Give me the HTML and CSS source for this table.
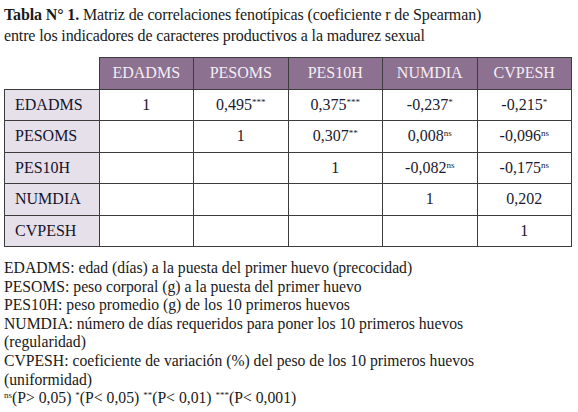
FILE: index.html
```html
<!DOCTYPE html>
<html lang="es">
<head>
<meta charset="utf-8">
<link rel="stylesheet" href="styles.css">
</head>
<body>
<div class="page">
  <p class="title"><b>Tabla N° 1.</b> Matriz de correlaciones fenotípicas (coeficiente r de Spearman)<br>entre los indicadores de caracteres productivos a la madurez sexual</p>
  <table class="matrix">
    <thead>
      <tr>
        <th class="corner"></th>
        <th>EDADMS</th>
        <th>PESOMS</th>
        <th>PES10H</th>
        <th>NUMDIA</th>
        <th>CVPESH</th>
      </tr>
    </thead>
    <tbody>
      <tr>
        <td class="stub">EDADMS</td>
        <td>1</td>
        <td>0,495<sup>***</sup></td>
        <td>0,375<sup>***</sup></td>
        <td>-0,237<sup>*</sup></td>
        <td>-0,215<sup>*</sup></td>
      </tr>
      <tr>
        <td class="stub">PESOMS</td>
        <td></td>
        <td>1</td>
        <td>0,307<sup>**</sup></td>
        <td>0,008<sup>ns</sup></td>
        <td>-0,096<sup>ns</sup></td>
      </tr>
      <tr>
        <td class="stub">PES10H</td>
        <td></td>
        <td></td>
        <td>1</td>
        <td>-0,082<sup>ns</sup></td>
        <td>-0,175<sup>ns</sup></td>
      </tr>
      <tr>
        <td class="stub">NUMDIA</td>
        <td></td>
        <td></td>
        <td></td>
        <td>1</td>
        <td>0,202</td>
      </tr>
      <tr>
        <td class="stub">CVPESH</td>
        <td></td>
        <td></td>
        <td></td>
        <td></td>
        <td>1</td>
      </tr>
    </tbody>
  </table>
  <div class="notes">
    <p>EDADMS: edad (días) a la puesta del primer huevo (precocidad)</p>
    <p>PESOMS: peso corporal (g) a la puesta del primer huevo</p>
    <p>PES10H: peso promedio (g) de los 10 primeros huevos</p>
    <p>NUMDIA: número de días requeridos para poner los 10 primeros huevos<br>(regularidad)</p>
    <p>CVPESH: coeficiente de variación (%) del peso de los 10 primeros huevos<br>(uniformidad)</p>
    <p><sup>ns</sup>(P&gt; 0,05) <sup>*</sup>(P&lt; 0,05) <sup>**</sup>(P&lt; 0,01) <sup>***</sup>(P&lt; 0,001)</p>
  </div>
</div>
</body>
</html>
```

FILE: styles.css
```css
html, body {
  margin: 0;
  padding: 0;
  background: #ffffff;
}
.page {
  padding: 4px 4px 0 4px;
  font-family: "Liberation Serif", "Times New Roman", serif;
  color: #1a1a1a;
}
.title {
  margin: 0;
  font-size: 16px;
  line-height: 21px;
  letter-spacing: -0.13px;
  white-space: nowrap;
}
.title b {
  font-weight: bold;
}
.matrix {
  margin-top: 11px;
  border-collapse: collapse;
  width: 568px;
  table-layout: fixed;
  font-size: 16px;
}
.matrix th,
.matrix td {
  height: 30.5px;
  padding: 0;
  border: 1.5px solid #3c3c3c;
  text-align: center;
  color: #1a1a2e;
}
.matrix th {
  background: #8d7190;
  color: #f4eef4;
  font-weight: normal;
}
.matrix th.corner {
  background: transparent;
  border: none;
}
.matrix td.stub {
  background: #e6e0ea;
  text-align: left;
  padding-left: 10px;
  color: #14142a;
}
.matrix sup {
  font-size: 9px;
  vertical-align: 5px;
  line-height: 0;
}
.notes {
  margin-top: 12px;
  font-size: 15.7px;
  line-height: 18.6px;
  white-space: nowrap;
}
.notes p {
  margin: 0;
}
.notes sup {
  font-size: 9px;
  vertical-align: 5px;
  line-height: 0;
}
```
